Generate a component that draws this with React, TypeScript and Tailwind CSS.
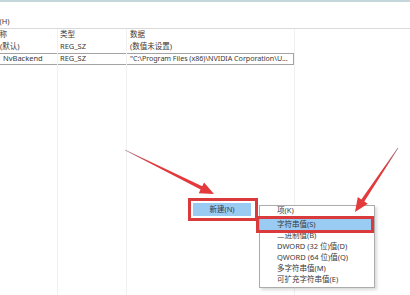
import React from "react";

const font = { fontFamily: '"Noto Sans", "Noto Sans CJK SC", sans-serif' };

function Cell({ children, className = "" }: { children?: React.ReactNode; className?: string }) {
  return <div className={`h-[12px] flex items-center whitespace-nowrap overflow-hidden ${className}`}>{children}</div>;
}

export default function App() {
  const rowBox = "border-y border-[#a3a3a3]";
  return (
    <div className="relative w-[410px] h-[295px] overflow-hidden bg-white text-[#3a3a3a] text-[7.5px] leading-none" style={font}>
      <div className="h-[2px] bg-[#c6d6dd]" />
      <div className="h-[14px]" />
      <div className="h-[12px] flex items-center -ml-[8px]">助(H)</div>
      <div className="h-[1px] bg-[#d9d9d9]" />
      <div className="flex h-[266px]">
        <div className="w-[58px] border-r border-[#f1f1f1] flex flex-col">
          <Cell><span className="-ml-[8px]">名称</span></Cell>
          <Cell>(默认)</Cell>
          <Cell className={`${rowBox} pl-[3px]`}>NvBackend</Cell>
        </div>
        <div className="w-[69px] border-r border-[#f1f1f1] flex flex-col">
          <Cell className="pl-[2px]">类型</Cell>
          <Cell className="pl-[2px]">REG_SZ</Cell>
          <Cell className={`${rowBox} pl-[2px]`}>REG_SZ</Cell>
        </div>
        <div className="w-[167px] flex flex-col">
          <Cell className="pl-[3px]">数据</Cell>
          <Cell className="pl-[3px]">(数值未设置)</Cell>
          <Cell className={`${rowBox} border-r pl-[3px] text-[7.2px] tracking-[-0.05px]`}>"C:\Program Files (x86)\NVIDIA Corporation\U...</Cell>
        </div>
        <div className="flex-1 border-l border-[#f1f1f1]" />
      </div>

      {/* Context menu 1 item */}
      <div className="absolute left-[188px] top-[198px] w-[70px] h-[23px] border-[3px] border-[#d93a3c] p-[2px] bg-white">
        <div className="h-full w-[58px] bg-[#9acbf2] flex items-center justify-center">新建(N)</div>
      </div>

      {/* Submenu */}
      <div className="absolute left-[259px] top-[205px] w-[116px] h-[83px] border border-[#acacac] bg-white shadow-[2px_2px_3px_rgba(0,0,0,0.15)] flex flex-col pr-[3px]">
        <div className="h-[10px] flex items-center pl-[17px]">项(K)</div>
        <div className="h-[3px]" />
        <div className="h-[11px] flex items-center pl-[17px] bg-[#9acbf2]">字符串值(S)</div>
        <div className="h-[11px] flex items-center pl-[17px]">二进制值(B)</div>
        <div className="h-[11px] flex items-center pl-[17px]">DWORD (32 位)值(D)</div>
        <div className="h-[11px] flex items-center pl-[17px]">QWORD (64 位)值(Q)</div>
        <div className="h-[11px] flex items-center pl-[17px]">多字符串值(M)</div>
        <div className="h-[11px] flex items-center pl-[17px]">可扩充字符串值(E)</div>
      </div>
      <div className="absolute left-[256px] top-[216px] w-[118px] h-[17px] border-[3px] border-[#d93a3c]" />

      {/* Arrows */}
      <svg className="absolute left-0 top-0 pointer-events-none" width="410" height="295" viewBox="0 0 410 295">
        <defs>
          <linearGradient id="g1" gradientUnits="userSpaceOnUse" x1="125" y1="150" x2="214" y2="194">
            <stop offset="0" stopColor="#9a7080" />
            <stop offset="0.3" stopColor="#e0393c" />
            <stop offset="1" stopColor="#e53a3c" />
          </linearGradient>
          <linearGradient id="g2" gradientUnits="userSpaceOnUse" x1="398" y1="148" x2="355" y2="212">
            <stop offset="0" stopColor="#9a7080" />
            <stop offset="0.3" stopColor="#e0393c" />
            <stop offset="1" stopColor="#e53a3c" />
          </linearGradient>
        </defs>
        <polygon
          fill="url(#g1)"
          points="124.9,150.3 200.6,189.4 198.7,193.2 214,194 204.1,182.4 202.2,186.2 125.1,149.7"
        />
        <polygon
          fill="url(#g2)"
          points="398.25,148.17 364.3,201.4 367.8,203.7 355,212 357.8,197.1 361.3,199.4 397.75,147.83"
        />
      </svg>
    </div>
  );
}
